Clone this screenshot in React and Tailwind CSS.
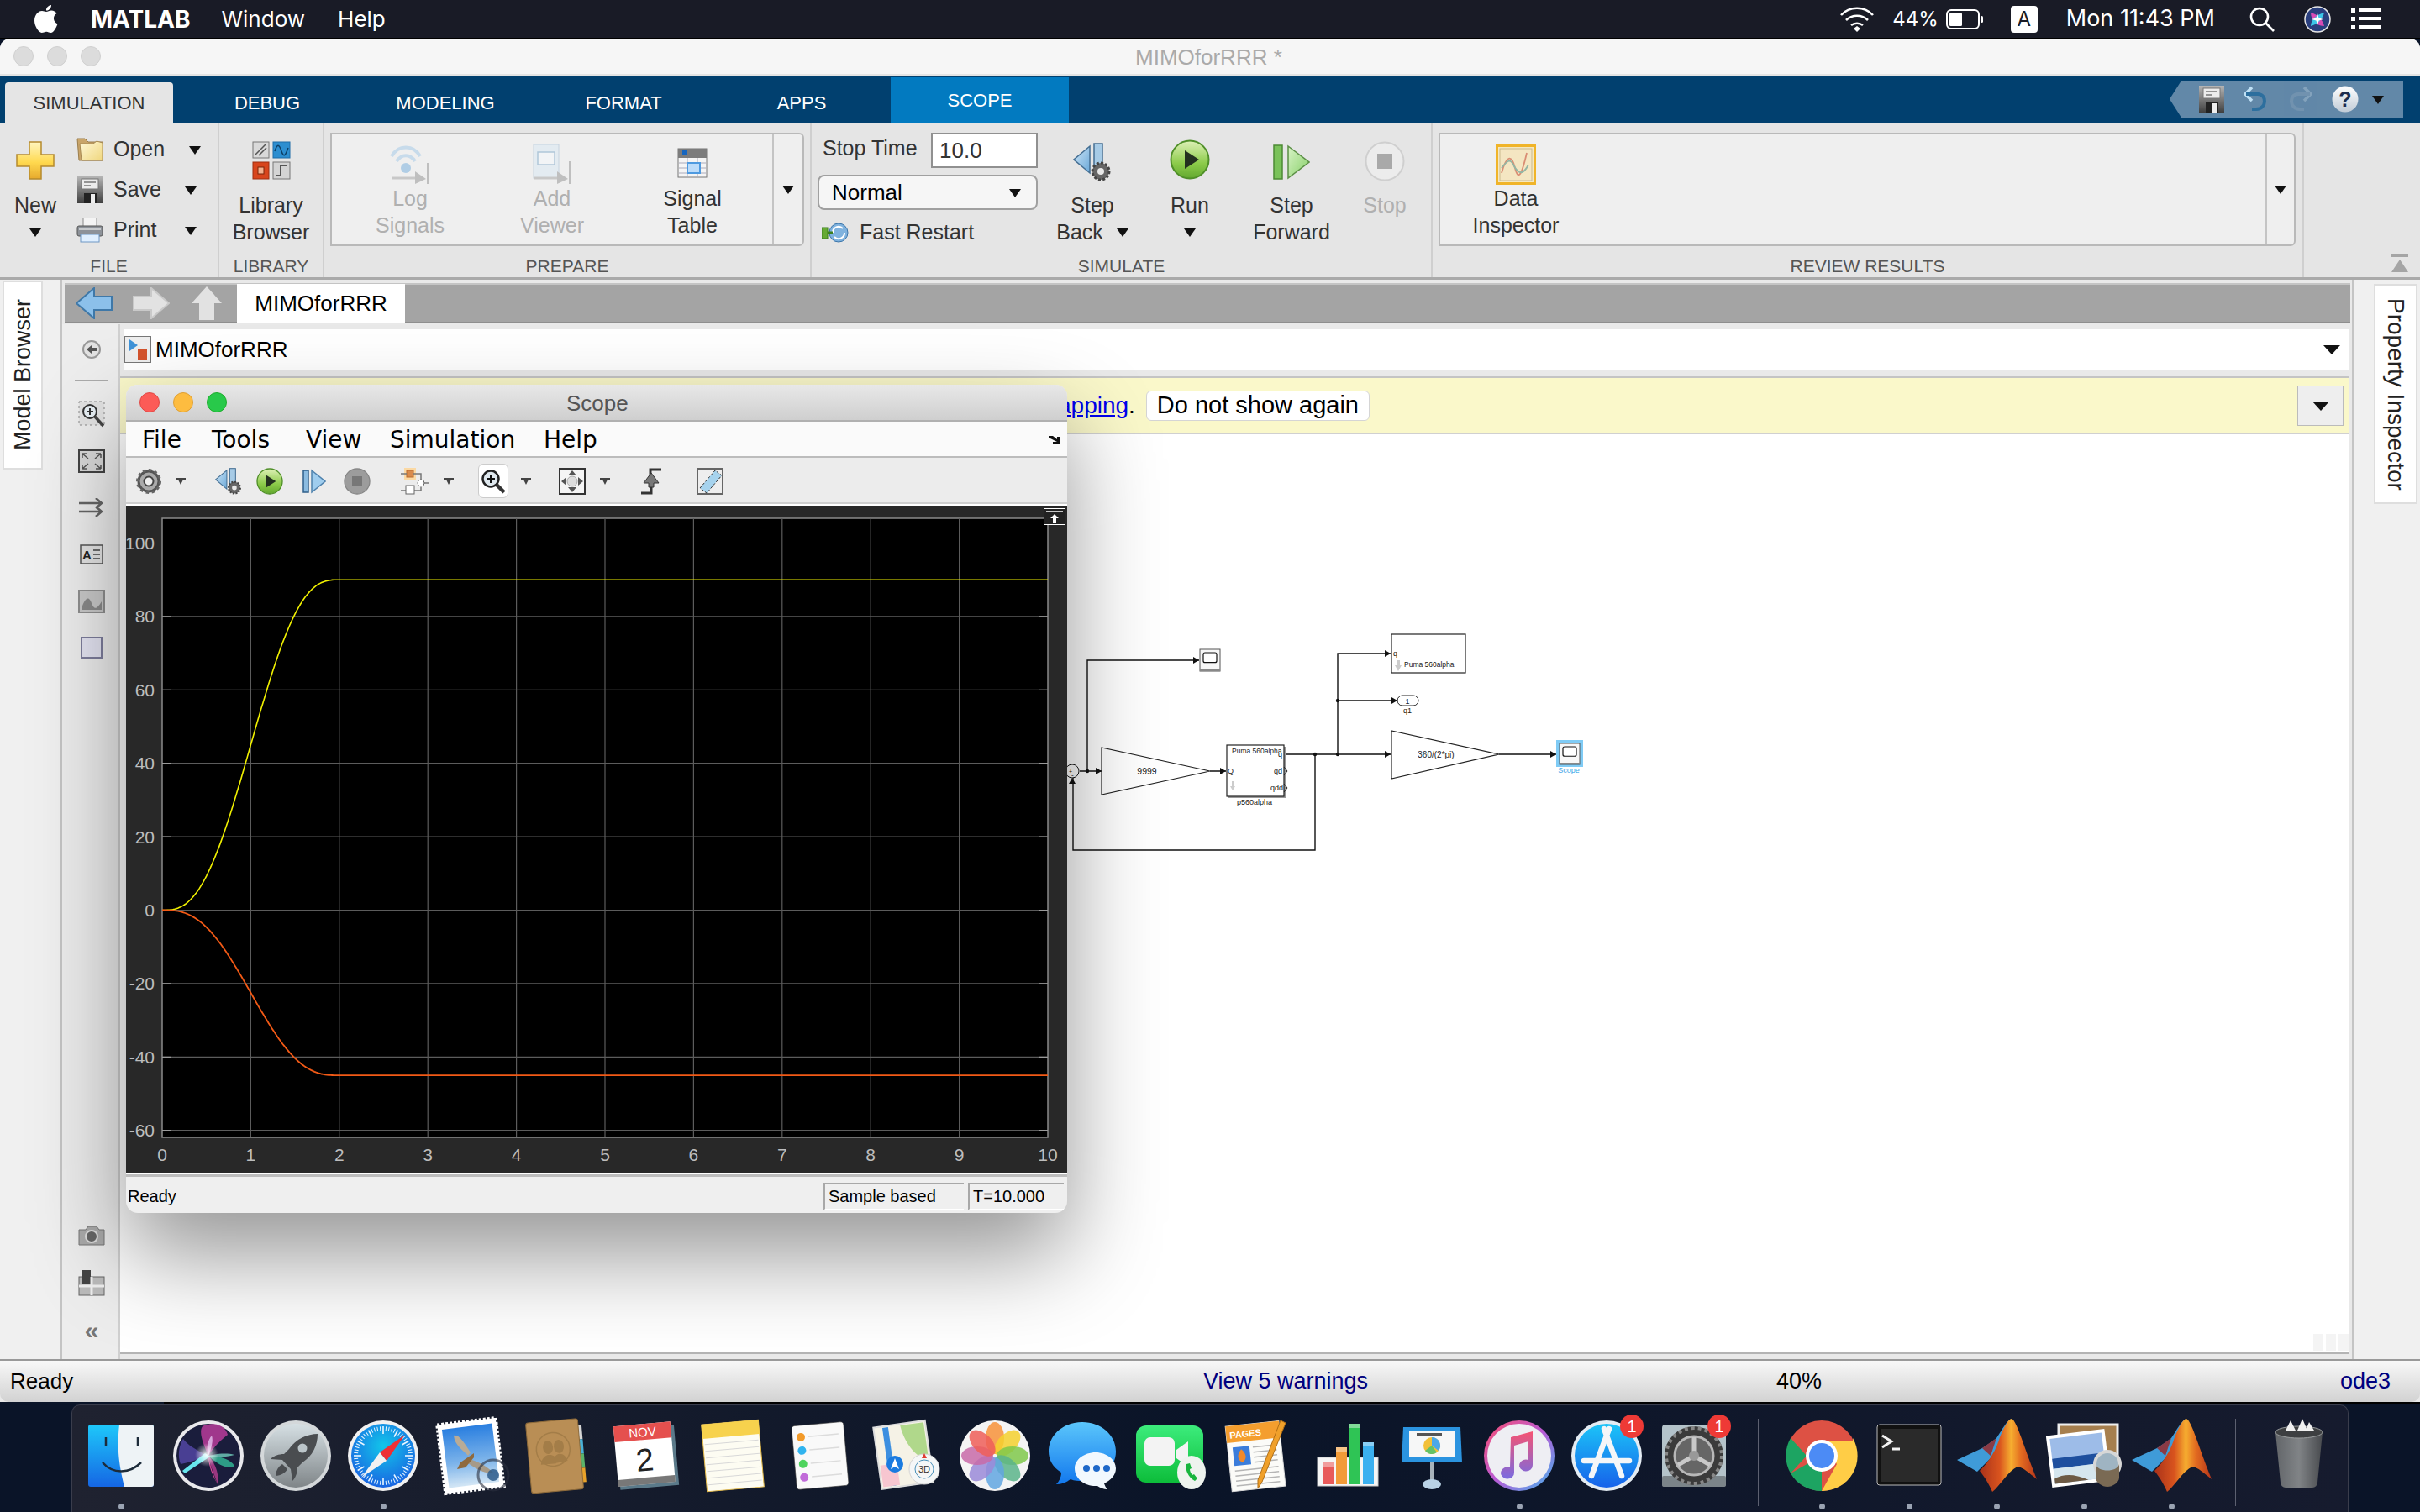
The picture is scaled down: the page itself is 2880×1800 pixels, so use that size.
import React from "react";

// ---------- small shared bits ----------

function Caret({ className = "", big = false }) {
  return (
    <svg width={big ? 20 : 14} height={big ? 12 : 11} viewBox="0 0 14 11" preserveAspectRatio="none" className={className}>
      <path d="M0 1h14L7 11z" fill="#111" />
    </svg>
  );
}

function TinyCaret({ className = "" }) {
  return (
    <svg width="12" height="8" viewBox="0 0 12 8" className={className}>
      <path d="M0 0h12v2H9L6 8 3 2H0z" fill="#444" />
    </svg>
  );
}

function Floppy({ w = 32, h = 32 }) {
  return (
    <svg width={w} height={h} viewBox="0 0 32 32">
      <defs>
        <linearGradient id="fl" x1="0" y1="0" x2="0" y2="1">
          <stop offset="0" stopColor="#b5b5b5" />
          <stop offset="1" stopColor="#3f3f3f" />
        </linearGradient>
      </defs>
      <rect x="1" y="0" width="30" height="32" fill="url(#fl)" />
      <rect x="6" y="3" width="20" height="12" fill="#ececec" stroke="#777" />
      <path d="M9 7h14M9 11h8" stroke="#777" strokeWidth="1.5" />
      <rect x="9" y="20" width="15" height="12" fill="#222" />
      <rect x="17" y="21" width="5" height="11" fill="#eee" />
    </svg>
  );
}

// ---------- ribbon icons ----------

function PlusIcon() {
  return (
    <svg width="46" height="46" viewBox="0 0 46 46">
      <defs>
        <linearGradient id="pl" x1="0" y1="0" x2="0" y2="1">
          <stop offset="0" stopColor="#fff6c0" />
          <stop offset="0.55" stopColor="#ffd94f" />
          <stop offset="1" stopColor="#e6a92c" />
        </linearGradient>
      </defs>
      <path d="M16 1h14v15h15v14H30v15H16V30H1V16h15z" fill="url(#pl)" stroke="#b58a2e" strokeWidth="1.5" />
    </svg>
  );
}

function FolderIcon() {
  return (
    <svg width="32" height="28" viewBox="0 0 32 28">
      <defs>
        <linearGradient id="fo" x1="0" y1="0" x2="1" y2="1">
          <stop offset="0" stopColor="#fff8d8" />
          <stop offset="1" stopColor="#f0d77e" />
        </linearGradient>
      </defs>
      <path d="M1 1h9l4 4h17v22H3z" fill="#c9a56a" stroke="#9a7c4a" />
      <path d="M4 7h16l4-3 7 2v21H6z" fill="url(#fo)" stroke="#a88a52" />
    </svg>
  );
}

function PrinterIcon() {
  return (
    <svg width="32" height="30" viewBox="0 0 32 30">
      <rect x="8" y="0" width="16" height="11" fill="#f4f4f4" stroke="#8a8a8a" />
      <rect x="1" y="10" width="30" height="12" rx="2" fill="#8d9299" stroke="#555" />
      <rect x="3" y="12" width="26" height="3" fill="#c6c9cc" />
      <rect x="5" y="20" width="22" height="9" fill="#dfefff" stroke="#6f97c4" />
    </svg>
  );
}

function LibraryIcon() {
  return (
    <svg width="46" height="46" viewBox="0 0 46 46">
      <rect x="1" y="1" width="19" height="19" fill="#d9d9d9" stroke="#777" />
      <path d="M4 16 16 4M8 17 17 8" stroke="#555" strokeWidth="1.5" />
      <rect x="25" y="1" width="20" height="19" fill="#2d8ed0" stroke="#1e6da8" />
      <path d="M27 12c3-9 5-9 8 0s5 4 8-4" fill="none" stroke="#0d3f66" strokeWidth="1.5" />
      <rect x="1" y="25" width="19" height="20" fill="#d8451c" stroke="#9c2f10" />
      <rect x="7" y="31" width="7" height="8" fill="#f3b08e" stroke="#7a2408" />
      <rect x="25" y="25" width="20" height="20" fill="#d4d4d4" stroke="#777" />
      <path d="M28 41h6V29h8" fill="none" stroke="#555" strokeWidth="2" />
    </svg>
  );
}

function LogSignalsIcon() {
  return (
    <svg width="48" height="48" viewBox="0 0 48 48" opacity="0.55">
      <path d="M2 14C10 0 28 0 36 14" fill="none" stroke="#a8cbe8" strokeWidth="4" />
      <path d="M8 20c6-9 16-9 22 0" fill="none" stroke="#a8cbe8" strokeWidth="4" />
      <circle cx="19" cy="28" r="6" fill="#7eb3dd" />
      <path d="M2 40h28" stroke="#aaa" strokeWidth="3" />
      <path d="M30 32l13 9-13 6z" fill="#999" />
      <path d="M45 22v25" stroke="#999" strokeWidth="2" />
    </svg>
  );
}

function AddViewerIcon() {
  return (
    <svg width="48" height="48" viewBox="0 0 48 48" opacity="0.55">
      <rect x="2" y="0" width="30" height="40" fill="#dbe8f4" stroke="#a4bdd4" />
      <rect x="7" y="9" width="20" height="15" fill="#f5f9fc" stroke="#7ea6c8" strokeWidth="1.5" />
      <path d="M2 40h28" stroke="#aaa" strokeWidth="3" />
      <path d="M30 32l13 9-13 6z" fill="#999" />
      <path d="M45 20v27" stroke="#999" strokeWidth="2" />
    </svg>
  );
}

function SignalTableIcon() {
  return (
    <svg width="36" height="36" viewBox="0 0 36 36">
      <rect x="1" y="1" width="34" height="34" fill="#f5f5f5" stroke="#777" />
      <rect x="1" y="1" width="34" height="11" fill="#7c7c7c" />
      <rect x="6" y="3" width="6" height="6" fill="#1565c0" />
      <path d="M2 18h32M2 24h32M2 30h32M12 12v23M24 12v23" stroke="#aab" />
      <rect x="12" y="18" width="15" height="12" fill="#bcdcfa" stroke="#4e9ae0" strokeWidth="2" />
    </svg>
  );
}

function FastRestartIcon() {
  return (
    <svg width="32" height="26" viewBox="0 0 32 26">
      <rect x="0" y="7" width="7" height="13" fill="#66aa33" stroke="#3b7f1e" />
      <circle cx="20" cy="13" r="11" fill="#7fb2de" stroke="#3d76aa" />
      <path d="M13 13a7 7 0 0 1 12-5M27 13a7 7 0 0 1-12 5" fill="none" stroke="#fff" strokeWidth="2" />
      <path d="M7 13h6" stroke="#3b7f1e" strokeWidth="3" />
    </svg>
  );
}

function StepBackIcon({ s = 46 }) {
  return (
    <svg width={s} height={s} viewBox="0 0 46 46">
      <defs>
        <linearGradient id="sb" x1="0" y1="0" x2="1" y2="1">
          <stop offset="0" stopColor="#cfe6f7" />
          <stop offset="1" stopColor="#6aa8d8" />
        </linearGradient>
      </defs>
      <path d="M20 4v32L1 20z" fill="url(#sb)" stroke="#456f93" strokeWidth="1.5" />
      <rect x="25" y="1" width="10" height="30" fill="#a7cbe6" stroke="#456f93" strokeWidth="1.5" />
      <circle cx="33" cy="34" r="10" fill="#666" />
      <circle cx="33" cy="34" r="10" fill="none" stroke="#444" strokeWidth="3" strokeDasharray="3 2.2" />
      <circle cx="33" cy="34" r="4" fill="#e8e8e8" />
    </svg>
  );
}

function RunIcon({ s = 48 }) {
  return (
    <svg width={s} height={s} viewBox="0 0 48 48">
      <defs>
        <linearGradient id="rg" x1="0" y1="0" x2="0" y2="1">
          <stop offset="0" stopColor="#dff1b8" />
          <stop offset="0.6" stopColor="#8ccb4a" />
          <stop offset="1" stopColor="#62a82e" />
        </linearGradient>
      </defs>
      <circle cx="24" cy="24" r="22.5" fill="url(#rg)" stroke="#4f8f28" strokeWidth="2" />
      <path d="M18 13l17 11-17 11z" fill="#23301f" />
    </svg>
  );
}

function StepForwardIcon() {
  return (
    <svg width="44" height="42" viewBox="0 0 44 42">
      <defs>
        <linearGradient id="sf" x1="0" y1="0" x2="1" y2="1">
          <stop offset="0" stopColor="#d8f3c6" />
          <stop offset="1" stopColor="#86cf67" />
        </linearGradient>
      </defs>
      <rect x="1" y="1" width="10" height="40" fill="#7ac25a" stroke="#4c8a34" strokeWidth="1.5" />
      <path d="M18 2l25 19-25 19z" fill="url(#sf)" stroke="#5b8f45" strokeWidth="1.5" />
    </svg>
  );
}

function StopIcon({ s = 48, dark = false }) {
  return (
    <svg width={s} height={s} viewBox="0 0 48 48">
      <circle cx="24" cy="24" r="22.5" fill={dark ? "#9c9c9c" : "#ececec"} stroke={dark ? "#868686" : "#cfcfcf"} strokeWidth="2" />
      <rect x="15" y="15" width="18" height="18" fill={dark ? "#777" : "#a9a9a9"} />
    </svg>
  );
}

function DataInspectorIcon() {
  return (
    <svg width="48" height="48" viewBox="0 0 48 48">
      <rect x="1.5" y="1.5" width="45" height="45" fill="#f5e8c0" stroke="#f0b429" strokeWidth="3" />
      <rect x="5" y="5" width="38" height="38" fill="#f4e6c2" stroke="#c9b98e" />
      <path d="M7 34c6-22 12-22 16-6s8 8 14-18" fill="none" stroke="#d98d74" strokeWidth="1.8" />
      <path d="M7 28c6-8 10-12 14-4s10 16 18 0" fill="none" stroke="#93b6a4" strokeWidth="1.8" />
    </svg>
  );
}

// ---------- ribbon layout ----------

function RibbonLabel({ children }) {
  return (
    <div className="h-[30px] pt-[2px] flex items-center justify-center text-[21px] leading-none text-[#555]">
      {children}
    </div>
  );
}

function Group({ width, label, children }) {
  return (
    <div className={`${width} h-full flex flex-col border-r-2 border-[#cfcfcf] pt-[12px]`}>
      <div className="h-[142px] flex">{children}</div>
      <RibbonLabel>{label}</RibbonLabel>
    </div>
  );
}

function BigButton({ icon, lines, gray, width, caret, iconClass = "h-[60px] items-end", onSameLine }) {
  return (
    <div className={`${width} flex flex-col items-center text-[25px] leading-[32px] ${gray ? "text-[#b0b0b0]" : "text-[#333]"}`}>
      <div className={`${iconClass} flex justify-center`}>{icon}</div>
      {lines.map((l, i) => (
        <div key={l} className="flex items-center gap-[16px]">
          {l}
          {onSameLine && i === lines.length - 1 && <Caret />}
        </div>
      ))}
      {caret && <div className="h-[32px] flex items-center"><Caret /></div>}
    </div>
  );
}

function FileRow({ icon, label, caretClass }) {
  return (
    <div className="h-[48px] flex items-center text-[25px] text-[#333]">
      <div className="w-[51px] pr-[6px] flex justify-center">{icon}</div>
      <span>{label}</span>
      <Caret className={caretClass} />
    </div>
  );
}

function Ribbon() {
  return (
    <div className="h-[187px] flex bg-[#e5e5e5] border-b-[3px] border-[#aaaaaa] text-[25px]">
      <Group width="w-[261px]" label="FILE">
        <div className="w-[84px] flex flex-col items-center pt-[10px]">
          <PlusIcon />
          <div className="mt-[14px] text-[#333] leading-[32px]">New</div>
          <div className="h-[32px] flex items-center"><Caret /></div>
        </div>
        <div className="-mt-[4px] w-[170px]">
          <FileRow icon={<FolderIcon />} label="Open" caretClass="ml-[29px]" />
          <FileRow icon={<Floppy />} label="Save" caretClass="ml-[28px]" />
          <FileRow icon={<PrinterIcon />} label="Print" caretClass="ml-[34px]" />
        </div>
      </Group>
      <Group width="w-[125px]" label="LIBRARY">
        <div className="w-full flex flex-col items-center text-[#333] leading-[32px]">
          <div className="h-[70px] pt-[10px]"><LibraryIcon /></div>
          <div>Library</div>
          <div>Browser</div>
        </div>
      </Group>
      <Group width="w-[580px]" label="PREPARE">
        <div className="ml-[7px] w-[564px] h-[135px] flex bg-[#efefef] border-2 border-[#b9b9b9] rounded-r-[6px]">
          <div className="w-[524px] flex pl-[8px]">
            <BigButton width="w-[170px]" gray lines={["Log", "Signals"]} icon={<LogSignalsIcon />} />
            <BigButton width="w-[168px]" gray lines={["Add", "Viewer"]} icon={<AddViewerIcon />} />
            <BigButton width="w-[166px]" lines={["Signal", "Table"]} icon={<div className="mb-[8px]"><SignalTableIcon /></div>} />
          </div>
          <div className="flex-1 border-l-2 border-[#c4c4c4] flex items-center justify-center"><Caret /></div>
        </div>
      </Group>
      <Group width="w-[739px]" label="SIMULATE">
        <div className="pl-[7px] w-[276px] flex flex-col">
          <div className="h-[42px] flex items-center justify-between text-[#333] pr-[7px]">
            <span className="pl-[6px] pb-[4px]">Stop Time</span>
            <div className="w-[127px] h-[42px] bg-white border-2 border-[#909090] pl-[8px] flex items-center text-[26px]">10.0</div>
          </div>
          <div className="mt-[8px] w-[262px] h-[42px] bg-[#f6f6f6] border-2 border-[#a0a0a0] rounded-[8px] flex items-center justify-between pl-[15px] pr-[18px] text-black text-[26px]">
            Normal <Caret />
          </div>
          <div className="mt-[11px] h-[32px] flex items-center gap-[13px] text-[#333] pl-[5px]">
            <FastRestartIcon />
            Fast Restart
          </div>
        </div>
        <BigButton width="w-[116px]" lines={["Step", "Back"]} icon={<StepBackIcon />} onSameLine iconClass="h-[70px] pt-[12px]" />
        <BigButton width="w-[116px]" lines={["Run"]} caret icon={<RunIcon />} iconClass="h-[70px] pt-[8px]" />
        <BigButton width="w-[126px]" lines={["Step", "Forward"]} icon={<StepForwardIcon />} iconClass="h-[70px] pt-[14px]" />
        <BigButton width="w-[96px]" gray lines={["Stop"]} icon={<StopIcon />} iconClass="h-[70px] pt-[10px]" />
      </Group>
      <Group width="w-[1037px]" label="REVIEW RESULTS">
        <div className="ml-[7px] w-[1020px] h-[135px] flex bg-[#efefef] border-2 border-[#b9b9b9] rounded-r-[6px]">
          <div className="w-[982px] pl-[40px]">
            <BigButton width="w-[100px]" lines={["Data", "Inspector"]} icon={<DataInspectorIcon />} />
          </div>
          <div className="flex-1 border-l-2 border-[#c4c4c4] flex items-center justify-center"><Caret /></div>
        </div>
      </Group>
      <div className="flex-1 flex flex-col items-end justify-end pr-[14px] pb-[6px]">
        <svg width="20" height="22" viewBox="0 0 20 22">
          <rect x="0" y="0" width="20" height="4" fill="#a5a5a5" />
          <path d="M10 7l10 15H0z" fill="#a5a5a5" />
        </svg>
      </div>
    </div>
  );
}

// ---------- mac menu bar ----------

function MenuBar() {
  return (
    <div className="h-[46px] shrink-0 bg-[#191b26] border-b border-black flex items-center text-white text-[26px] font-['Inter',sans-serif]">
      <svg width="30" height="36" viewBox="0 0 30 36" className="ml-[40px]">
        <path d="M21 1c.3 3-2.4 6.8-6 6.6C14.600 4.400 17.500 1.400 21 1zM15 9c1.800 0 3.600-1.400 6.200-1.400 2.500 0 5 1.300 6.300 3.500-5.200 2.900-4.400 10.200 1 12.300-1.300 3.500-4.600 10.600-8 10.600-2 0-3-1.300-5.300-1.300s-3.600 1.300-5.500 1.300C5.800 34 1 26 1 19.600 1 12.900 5.400 8 10 8c2 0 3.600 1 5 1z" fill="#fff" />
      </svg>
      <span className="ml-[38px] font-bold text-[28px]">MATLAB</span>
      <span className="ml-[37px]">Window</span>
      <span className="ml-[39px]">Help</span>
      <div className="ml-auto flex items-center">
        <svg width="40" height="30" viewBox="0 0 40 30" fill="none" stroke="#fff" strokeWidth="2.6">
          <path d="M1 10c10-11 28-11 38 0M7 16c7-7 19-7 26 0M13 22c4-3 10-3 14 0" />
          <path d="M16 26l4-3 4 3-4 4z" fill="#fff" stroke="none" />
        </svg>
        <span className="ml-[22px] text-[24px]">44%</span>
        <svg width="46" height="24" viewBox="0 0 46 24" className="ml-[9px]">
          <rect x="1" y="1" width="38" height="22" rx="5" fill="none" stroke="#fff" strokeWidth="2" />
          <rect x="4" y="4" width="15" height="16" rx="1.500" fill="#fff" />
          <rect x="41" y="8" width="3" height="8" rx="1.500" fill="#fff" />
        </svg>
        <div className="ml-[31px] w-[32px] h-[32px] rounded-[4px] bg-white text-[#191b26] flex items-center justify-center text-[24px]">A</div>
        <span className="ml-[34px] text-[27px]">Mon 11:43 PM</span>
        <svg width="30" height="30" viewBox="0 0 30 30" className="ml-[41px]" fill="none" stroke="#fff" strokeWidth="2.6">
          <circle cx="12" cy="12" r="10" />
          <path d="M19 19l10 10" />
        </svg>
        <svg width="32" height="32" viewBox="0 0 32 32" className="ml-[35px]">
          <circle cx="16" cy="16" r="15" fill="#2a3f7e" stroke="#e6e6e6" strokeWidth="1.500" />
          <path d="M8 8c8 2 14 8 16 16C16 24 8 18 8 8z" fill="#d64bb5" />
          <path d="M24 8c-2 8-8 14-16 16 0-8 8-14 16-16z" fill="#3cc7e8" />
          <path d="M16 9l1.500 5.500 5.500 1.500-5.500 1.500-1.500 5.500-1.500-5.500-5.500-1.500 5.500-1.500z" fill="#fff" />
        </svg>
        <svg width="36" height="26" viewBox="0 0 36 26" className="ml-[24px] mr-[46px]" fill="#fff">
          <rect x="0" y="0" width="5" height="5" />
          <rect x="9" y="0" width="27" height="4" />
          <rect x="0" y="10" width="5" height="5" />
          <rect x="9" y="10" width="27" height="4" />
          <rect x="0" y="20" width="5" height="5" />
          <rect x="9" y="20" width="27" height="4" />
        </svg>
      </div>
    </div>
  );
}

// ---------- tab bar ----------

function RibbonTabs() {
  const tabs = ["DEBUG", "MODELING", "FORMAT", "APPS"];
  return (
    <div className="h-[56px] shrink-0 bg-[#01406f] flex items-end pl-[6px] text-[22px] text-white">
      <div className="w-[200px] h-[48px] bg-[#e5e5e5] rounded-t-[4px] flex items-center justify-center text-[#333]">SIMULATION</div>
      <div className="w-[6px]" />
      {tabs.map((t) => (
        <div key={t} className="w-[212px] h-[48px] flex items-center justify-center">{t}</div>
      ))}
      <div className="w-[212px] h-[54px] bg-[#027ac0] pt-[1px] flex items-center justify-center">SCOPE</div>
      <div className="ml-auto mb-[6px] mr-[20px] w-[278px] h-[44px] bg-[#6288a8] flex items-center pl-[34px] [clip-path:polygon(14px_0,100%_0,100%_100%,14px_100%,0_50%)]">
        <Floppy />
        <svg width="30" height="34" viewBox="0 0 30 34" className="ml-[22px]" fill="none">
          <path d="M10 3L2 11l8 8" stroke="#bfe0f5" strokeWidth="3.500" />
          <path d="M3 11h14c11 0 11 18-2 18h-5" stroke="#2d6f9e" strokeWidth="4" />
        </svg>
        <svg width="30" height="34" viewBox="0 0 30 34" className="ml-[22px]" fill="none" opacity="0.55">
          <path d="M20 3l8 8-8 8" stroke="#9fb8cc" strokeWidth="3.500" />
          <path d="M27 11H13C2 11 2 29 15 29h5" stroke="#7f9cb4" strokeWidth="4" />
        </svg>
        <svg width="32" height="34" viewBox="0 0 32 34" className="ml-[23px]">
          <defs>
            <linearGradient id="hp" x1="0" y1="0" x2="0" y2="1">
              <stop offset="0" stopColor="#ffffff" />
              <stop offset="1" stopColor="#c0cbd6" />
            </linearGradient>
          </defs>
          <circle cx="16" cy="17" r="15.500" fill="url(#hp)" />
          <text x="16" y="26" textAnchor="middle" fontSize="25" fontWeight="700" fill="#1d2d4f">?</text>
        </svg>
        <Caret className="ml-[16px]" />
      </div>
    </div>
  );
}

// ---------- simulink editor ----------

function NavArrow({ rotate = "", fill = "#e2e2e2", stroke = "#c9c9c9" }) {
  return (
    <svg width="44" height="38" viewBox="0 0 44 38" className={rotate}>
      <path d="M1 19L22 1v10h21v16H22v10z" fill={fill} stroke={stroke} strokeWidth="2" />
    </svg>
  );
}

function ToolIcon({ children, mt }) {
  return <div className={`${mt} h-[32px] flex items-center justify-center`}>{children}</div>;
}

function LeftTools() {
  return (
    <div className="w-[69px] shrink-0 flex flex-col items-center pt-[19px] pl-[3px] bg-[#ededed] border-r-2 border-[#d0d0d0]">
      <svg width="22" height="22" viewBox="0 0 22 22">
        <circle cx="11" cy="11" r="10" fill="#e2e2e2" stroke="#999" strokeWidth="2" />
        <path d="M5 11l6-5v3h6v4h-6v3z" fill="#555" />
      </svg>
      <div className="mt-[25px] w-[40px] h-[2px] bg-[#aaa]" />
      <ToolIcon mt="mt-[23px]">
        <svg width="32" height="32" viewBox="0 0 32 32">
          <rect x="1" y="1" width="30" height="28" fill="#e2e2e2" stroke="#888" strokeDasharray="3 3" />
          <circle cx="14" cy="13" r="8" fill="#e8f0f5" stroke="#333" strokeWidth="2" />
          <path d="M10 13h8M14 9v8" stroke="#333" strokeWidth="2" />
          <path d="M20 19l10 11" stroke="#444" strokeWidth="3.500" />
        </svg>
      </ToolIcon>
      <ToolIcon mt="mt-[24px]">
        <svg width="32" height="28" viewBox="0 0 32 28">
          <rect x="1" y="1" width="30" height="26" fill="#d8d8d8" stroke="#444" strokeWidth="2" />
          <path d="M5 5l7 6M5 5h6M5 5v5M27 5l-7 6M27 5h-6M27 5v5M5 23l7-6M5 23h6M5 23v-5M27 23l-7-6M27 23h-6M27 23v-5" stroke="#555" strokeWidth="1.500" fill="none" />
        </svg>
      </ToolIcon>
      <ToolIcon mt="mt-[23px]">
        <svg width="30" height="22" viewBox="0 0 30 22" fill="none" stroke="#666" strokeWidth="2.500">
          <path d="M0 6h26M20 0l7 6-7 6M0 16h26M20 10l7 6-7 6" />
        </svg>
      </ToolIcon>
      <ToolIcon mt="mt-[24px]">
        <svg width="28" height="24" viewBox="0 0 28 24">
          <rect x="1" y="1" width="26" height="22" fill="#e4e4e4" stroke="#555" strokeWidth="1.500" />
          <text x="3" y="18" fontSize="15" fontWeight="700" fill="#222">A</text>
          <path d="M16 7h8M16 12h8M16 17h8" stroke="#444" strokeWidth="1.500" />
        </svg>
      </ToolIcon>
      <ToolIcon mt="mt-[24px]">
        <svg width="32" height="28" viewBox="0 0 32 28">
          <rect x="1" y="1" width="30" height="26" fill="#c9c9c9" stroke="#8f8f8f" strokeWidth="2" />
          <path d="M4 22c5-14 9-14 12-6s6 8 12-2v10H4z" fill="#8a8a8a" />
        </svg>
      </ToolIcon>
      <ToolIcon mt="mt-[23px]">
        <div className="w-[26px] h-[26px] bg-[#e4e4f2] border-2 border-[#7d7d9c]" />
      </ToolIcon>
      <div className="mt-auto flex flex-col items-center pb-[19px]">
        <svg width="32" height="24" viewBox="0 0 32 24">
          <path d="M1 5h8l3-4h10l3 4h6v18H1z" fill="#aaa" stroke="#777" />
          <circle cx="16" cy="13" r="7" fill="#666" stroke="#ddd" strokeWidth="2" />
        </svg>
        <svg width="32" height="32" viewBox="0 0 32 32" className="mt-[28px]">
          <rect x="1" y="9" width="30" height="22" fill="#bbb" stroke="#666" />
          <rect x="5" y="1" width="10" height="16" fill="#444" />
          <path d="M1 20h30M16 9v22" stroke="#eee" strokeWidth="3" />
        </svg>
        <div className="mt-[26px] text-[#777] font-bold text-[30px] leading-[30px]">«</div>
      </div>
    </div>
  );
}

function Diagram() {
  // viewBox is in page pixels, the svg sits where page x 1100 meets the canvas
  const wire = { fill: "none", stroke: "#111", strokeWidth: 1.4 };
  const tx = "font-['Liberation_Sans',sans-serif]";
  const Head = ({ x, y, dir = "r" }) =>
    dir === "r" ? <path d={`M${x - 7} ${y - 4}L${x} ${y}L${x - 7} ${y + 4}z`} fill="#111" /> : <path d={`M${x - 4} ${y + 7}L${x} ${y}L${x + 4} ${y + 7}z`} fill="#111" />;
  const Dot = ({ x, y }) => <circle cx={x} cy={y} r="2.2" fill="#111" />;
  const MiniScope = ({ x, y, w, h }) => (
    <g>
      <rect x={x} y={y} width={w} height={h} fill="#f7f7f7" stroke="#555" />
      <rect x={x} y={y + h - 2} width={w} height="2" fill="#888" />
      <rect x={x + 4} y={y + 4} width={w - 8} height={h * 0.45} rx="2" fill="#fff" stroke="#111" strokeWidth="1.2" />
    </g>
  );
  return (
    <svg width="1000" height="700" viewBox="1100 517 1000 700" className="absolute left-[957px] top-0">
      <circle cx="1276" cy="918" r="8" fill="#fff" stroke="#111" />
      <text x="1272" y="921" fontSize="7" className={tx}>+</text>
      <text x="1275" y="925" fontSize="8" className={tx}>-</text>
      <path d="M1285 918H1311M1294 918V786H1427M1440 918H1459M1528 898H1655M1592 898V778H1655M1592 834H1663M1565 898V1012H1277V926M1784 898H1852" {...wire} />
      <Head x={1311} y={918} /><Head x={1427} y={786} /><Head x={1459} y={918} />
      <Head x={1655} y={898} /><Head x={1655} y={778} /><Head x={1663} y={834} /><Head x={1852} y={898} />
      <Head x={1276} y={926} dir="u" />
      <Dot x={1294} y={918} /><Dot x={1565} y={898} /><Dot x={1592} y={898} /><Dot x={1592} y={834} />
      <path d="M1311 890V946L1440 918z" fill="#fff" stroke="#222" strokeWidth="1.200" />
      <text x="1365" y="922" fontSize="10.500" textAnchor="middle" fill="#222" className={tx}>9999</text>
      <MiniScope x={1428} y={773} w={24} h={26} />
      <rect x="1462" y="889" width="68" height="61" fill="#999" />
      <rect x="1460" y="887" width="68" height="61" fill="#fff" stroke="#222" strokeWidth="1.200" />
      <text x="1466" y="897" fontSize="8.500" fill="#222" className={tx}>Puma 560alpha</text>
      <text x="1461" y="921" fontSize="9" fill="#222" className={tx}>Q</text>
      <text x="1521" y="901" fontSize="9" fill="#222" className={tx}>q</text>
      <text x="1516" y="921" fontSize="9" fill="#222" className={tx}>qd</text>
      <text x="1512" y="941" fontSize="9" fill="#222" className={tx}>qdd</text>
      <path d="M1528 913l4 5-4 5M1528 933l4 5-4 5" fill="none" stroke="#222" />
      <path d="M1464 936l3 5 3-5h-2v-6h-2v6z" fill="#ccc" />
      <text x="1493" y="958" fontSize="9" textAnchor="middle" fill="#222" className={tx}>p560alpha</text>
      <rect x="1656" y="755" width="88" height="46" fill="#fff" stroke="#222" strokeWidth="1.200" />
      <text x="1658" y="781" fontSize="9" fill="#222" className={tx}>q</text>
      <text x="1671" y="794" fontSize="8.500" fill="#222" className={tx}>Puma 560alpha</text>
      <path d="M1660 792l4 7 4-7h-2v-6h-4v6z" fill="#ccc" />
      <rect x="1663" y="828" width="25" height="12" rx="6" fill="#fff" stroke="#222" />
      <text x="1675" y="837.500" fontSize="9" textAnchor="middle" fill="#222" className={tx}>1</text>
      <text x="1675" y="849" fontSize="9" textAnchor="middle" fill="#222" className={tx}>q1</text>
      <path d="M1656 870V927L1784 898z" fill="#fff" stroke="#222" strokeWidth="1.200" />
      <text x="1709" y="902" fontSize="10" textAnchor="middle" fill="#222" className={tx}>360/(2*pi)</text>
      <rect x="1852" y="881" width="32" height="32" fill="#7fcbf5" />
      <MiniScope x={1856} y={885} w={24} h={25} />
      <text x="1867" y="920" fontSize="9" textAnchor="middle" fill="#3ba4e8" className={tx}>Scope</text>
    </svg>
  );
}

function Editor() {
  return (
    <div className="flex-1 min-h-0 flex">
      <div className="w-[74px] shrink-0 bg-[#f0f0f0] border-r-2 border-[#c4c4c4] pl-[3px] pt-[1px]">
        <div className="w-[48px] h-[225px] bg-white border-2 border-[#dedede] flex items-center justify-center">
          <span className="[writing-mode:vertical-rl] rotate-180 text-[27px] text-[#222]">Model Browser</span>
        </div>
      </div>
      <div className="flex-1 min-w-0 flex flex-col">
        <div className="h-[53px] shrink-0 pl-[3px] pt-[4px] pr-[2px] flex">
          <div className="flex-1 h-[48px] bg-[#a4a4a4] border-y-2 border-t-[#c4c4c4] border-b-[#8e8e8e] flex items-stretch">
            <div className="w-[205px] flex items-center pl-[13px] gap-[24px]">
              <NavArrow fill="#8cc0ea" stroke="#3f78a8" />
              <NavArrow rotate="rotate-180" />
              <svg width="40" height="42" viewBox="0 0 40 42">
                <path d="M20 1l18 20H29v20H11V21H2z" fill="#e2e2e2" />
              </svg>
            </div>
            <div className="w-[200px] -my-[1px] bg-white flex items-center justify-center text-[26px] text-black">MIMOforRRR</div>
          </div>
        </div>
        <div className="flex-1 min-h-0 flex">
          <LeftTools />
          <div className="flex-1 min-w-0 flex flex-col pb-[6px] pr-[4px]">
            <div className="mt-[6px] ml-[5px] h-[48px] shrink-0 bg-white flex items-center text-[26px] text-black pr-[10px]">
              <svg width="32" height="32" viewBox="0 0 32 32" className="mr-[5px]">
                <rect x="0.500" y="0.500" width="31" height="31" fill="#eee" stroke="#777" />
                <path d="M6 4l10 7-10 7z" fill="#3f93d8" />
                <rect x="16" y="16" width="11" height="12" fill="#d4532c" />
              </svg>
              MIMOforRRR
              <Caret big className="ml-auto" />
            </div>
            <div className="mt-[8px] h-[69px] shrink-0 bg-[#faf8ca] border-t-2 border-[#c4c4c4] border-b border-b-[#d0d0d0] flex items-center text-[28px] text-black pl-[1116px] relative">
              <a className="text-[#0000ee] underline">apping</a>.
              <div className="ml-[13px] w-[266px] h-[36px] bg-white rounded-[6px] border border-[#d5d5d5] flex items-center justify-center text-[29px]">Do not show again</div>
              <div className="ml-auto mr-[6px] w-[55px] h-[48px] bg-[#eee] border border-[#bbb] flex items-center justify-center"><Caret big /></div>
            </div>
            <div className="flex-1 min-h-0 bg-white border-b-2 border-[#b4b4b4] relative overflow-hidden">
              <Diagram />
              <div className="absolute right-[0px] bottom-[2px] w-[42px] h-[20px] flex gap-[3px] opacity-60">
                <div className="w-[12px] bg-[#eee]" /><div className="w-[12px] bg-[#eee]" /><div className="w-[12px] bg-[#eee]" />
              </div>
            </div>
          </div>
        </div>
      </div>
      <div className="w-[81px] shrink-0 bg-[#f0f0f0] border-l-2 border-[#c4c4c4] pt-[5px] pl-[24px]">
        <div className="w-[52px] h-[262px] bg-white border-2 border-[#dedede] flex items-center justify-center">
          <span className="[writing-mode:vertical-rl] text-[28px] text-[#222]">Property Inspector</span>
        </div>
      </div>
    </div>
  );
}

function StatusBar() {
  return (
    <div className="h-[51px] shrink-0 border-t-2 border-[#999] bg-gradient-to-b from-[#f8f8f8] to-[#d2d2d2] rounded-b-[10px] relative flex items-center text-[27px] text-black">
      <span className="pl-[12px] w-[1432px] text-[26px]">Ready</span>
      <span className="text-[#00007f] w-[682px]">View 5 warnings</span>
      <span className="w-[671px]">40%</span>
      <span className="text-[#00007f]">ode3</span>
    </div>
  );
}

// ---------- scope window ----------

function ScopePlot() {
  const x0 = 43, xs = 105.4; // offsets inside the 1120 wide window
  const zero = 481.5, ys = 4.37; // y of value 0 inside the plot, px per unit
  const px = (t) => x0 + t * xs;
  const py = (v) => zero - v * ys;
  const curve = (q) => {
    let d = "";
    for (let t = 0; t <= 2.001; t += 0.02) {
      const s = t / 2;
      const v = q * (10 * s ** 3 - 15 * s ** 4 + 6 * s ** 5);
      d += `${t === 0 ? "M" : "L"}${px(t).toFixed(1)} ${py(v).toFixed(1)}`;
    }
    return `${d}L${px(10)} ${py(q)}`;
  };
  const xt = [0, 1, 2, 3, 4, 5, 6, 7, 8, 9, 10];
  const yt = [100, 80, 60, 40, 20, 0, -20, -40, -60];
  return (
    <svg width="1120" height="794" viewBox="0 0 1120 794" className="block">
      <rect x="0" y="0" width="1120" height="794" fill="#282828" />
      <rect x={x0} y="15" width={xs * 10} height="737" fill="#000" stroke="#8a8a8a" strokeWidth="1.500" />
      {xt.slice(1, -1).map((t) => (
        <path key={t} d={`M${px(t)} 15V752`} stroke="#5c5c5c" strokeWidth="1.200" />
      ))}
      {yt.map((v) => (
        <g key={v}>
          <path d={`M${x0} ${py(v)}H${px(10)}`} stroke="#5c5c5c" strokeWidth="1.200" />
          <path d={`M${x0} ${py(v)}h10M${px(10) - 10} ${py(v)}h10`} stroke="#9a9a9a" strokeWidth="1.200" />
          <text x="34" y={py(v) + 7.500} fontSize="21" textAnchor="end" fill="#bdbdbd" className="font-['Liberation_Sans',sans-serif]">{v}</text>
        </g>
      ))}
      {xt.map((t) => (
        <text key={t} x={px(t)} y="780" fontSize="21" textAnchor="middle" fill="#bdbdbd" className="font-['Liberation_Sans',sans-serif]">{t}</text>
      ))}
      <path d={curve(90)} fill="none" stroke="#f0f000" strokeWidth="1.600" />
      <path d={curve(-45)} fill="none" stroke="#f25a16" strokeWidth="1.800" />
    </svg>
  );
}

function ScopeWindow() {
  return (
    <div className="absolute left-[150px] top-[458px] w-[1120px] h-[986px] rounded-[14px] rounded-b-[14px] bg-[#efefef] shadow-[0_50px_110px_rgba(0,0,0,0.42)] overflow-hidden flex flex-col">
      <div className="h-[44px] shrink-0 bg-gradient-to-b from-[#e8e8e8] to-[#cfcfcf] border-b-2 border-[#b0b0b0] flex items-center pl-[16px]">
        <div className="w-[24px] h-[24px] rounded-full bg-[#fc5b57] border border-[#df4744]" />
        <div className="ml-[16px] w-[24px] h-[24px] rounded-full bg-[#fdbc40] border border-[#de9f34]" />
        <div className="ml-[16px] w-[24px] h-[24px] rounded-full bg-[#28c94a] border border-[#1dad2b]" />
        <span className="ml-[404px] pt-[2px] text-[26px] text-[#555]">Scope</span>
      </div>
      <div className="h-[43px] shrink-0 bg-[#fafafa] flex items-center pt-[2px] pl-[19px] text-[28px] text-black font-['DejaVu_Sans',sans-serif] border-b-2 border-[#bcbcbc]">
        <span className="w-[83px]">File</span>
        <span className="w-[112px]">Tools</span>
        <span className="w-[100px]">View</span>
        <span className="w-[183px]">Simulation</span>
        <span>Help</span>
        <svg width="14" height="12" viewBox="0 0 14 12" className="ml-auto mr-[8px]">
          <path d="M0 1h5l5 4V2l4 0v9H5l0-3h5L2 4H0z" fill="#111" />
        </svg>
      </div>
      <div className="h-[55px] shrink-0 bg-[#ececec] border-b-2 border-[#cfcfcf] flex items-center pt-[2px]">
        <svg width="30" height="30" viewBox="0 0 30 30" className="ml-[12px]">
          <circle cx="15" cy="15" r="12" fill="#aaa" stroke="#555" strokeWidth="3" />
          <circle cx="15" cy="15" r="13.500" fill="none" stroke="#666" strokeWidth="3" strokeDasharray="3.500 3.500" />
          <circle cx="15" cy="15" r="5.500" fill="#eee" stroke="#444" strokeWidth="2" />
        </svg>
        <TinyCaret className="ml-[17px]" />
        <div className="ml-[35px]"><StepBackIcon s={32} /></div>
        <div className="ml-[17px]"><RunIcon s={32} /></div>
        <svg width="28" height="30" viewBox="0 0 28 30" className="ml-[23px]">
          <rect x="1" y="2" width="6" height="26" fill="#8bbbe0" stroke="#2f5f8a" strokeWidth="1.500" />
          <path d="M11 2l16 13-16 13z" fill="#9fcdee" stroke="#4f82ad" strokeWidth="1.500" />
        </svg>
        <div className="ml-[21px]"><StopIcon s={32} dark /></div>
        <svg width="34" height="32" viewBox="0 0 34 32" className="ml-[36px]">
          <rect x="4" y="0" width="14" height="14" fill="#fbd9a4" />
          <rect x="7" y="3" width="8" height="8" fill="#d98b4d" stroke="#b96a2c" />
          <path d="M0 7h7M15 7h9v11M0 27h6M14 27h10v-4M28 18h6" stroke="#777" strokeWidth="1.500" fill="none" />
          <circle cx="24" cy="18" r="4" fill="#fff" stroke="#666" />
          <rect x="6" y="21" width="10" height="10" fill="#fff" stroke="#666" />
        </svg>
        <TinyCaret className="ml-[17px]" />
        <div className="ml-[29px] w-[36px] h-[41px] bg-white rounded-[6px] border border-[#ccc] flex items-center justify-center">
          <svg width="30" height="30" viewBox="0 0 30 30">
            <circle cx="12" cy="12" r="9.500" fill="#dfe8ee" stroke="#222" strokeWidth="2.500" />
            <path d="M7 12h10M12 7v10" stroke="#111" strokeWidth="2" />
            <path d="M19 19l9 9" stroke="#333" strokeWidth="4.500" />
          </svg>
        </div>
        <TinyCaret className="ml-[15px]" />
        <svg width="32" height="32" viewBox="0 0 32 32" className="ml-[33px]">
          <rect x="1" y="1" width="30" height="30" fill="#f5f5f5" stroke="#333" strokeWidth="2" />
          <path d="M16 3l5 6H11zM16 29l-5-6h10zM3 16l6-5v10zM29 16l-6 5V11z" fill="#555" />
          <circle cx="16" cy="16" r="6" fill="#ddd" stroke="#aaa" />
        </svg>
        <TinyCaret className="ml-[17px]" />
        <svg width="26" height="32" viewBox="0 0 26 32" className="ml-[36px]">
          <path d="M25 2H12v12M1 30h12V16" fill="none" stroke="#333" strokeWidth="3" />
          <path d="M13 6l-9 12h6v5h6v-5h6z" fill="#777" stroke="#333" />
        </svg>
        <svg width="32" height="32" viewBox="0 0 32 32" className="ml-[41px]">
          <rect x="1" y="1" width="30" height="30" fill="#eee" stroke="#666" strokeWidth="2" />
          <path d="M4 24L22 3l8 6-18 21z" fill="#a6d3ee" stroke="#333" strokeDasharray="3 2" />
        </svg>
      </div>
      <div className="h-[2px] shrink-0 bg-white" />
      <div className="relative h-[794px] shrink-0">
        <ScopePlot />
        <svg width="26" height="20" viewBox="0 0 26 20" className="absolute right-[2px] top-[3px]">
          <rect x="0.500" y="0.500" width="25" height="19" fill="#222" stroke="#fff" />
          <path d="M3 4h20" stroke="#fff" strokeWidth="1.500" />
          <path d="M13 7l5 5h-3v6h-4v-6H8z" fill="#fff" />
        </svg>
      </div>
      <div className="h-[2px] shrink-0 bg-white" />
      <div className="h-[3px] shrink-0 bg-[#bdbdbd]" />
      <div className="flex-1 flex items-center text-[20px] text-black pt-[3px] pr-[4px] pl-[2px]">
        <span className="mr-auto">Ready</span>
        <div className="w-[167px] h-[33px] mr-[5px] border-t-2 border-l-2 border-[#a8a8a8] border-b-2 border-b-white flex items-center pl-[4px]">Sample based</div>
        <div className="w-[114px] h-[33px] border-t-2 border-l-2 border-[#a8a8a8] border-b-2 border-b-white flex items-center pl-[4px]">T=10.000</div>
      </div>
    </div>
  );
}

// ---------- dock ----------

function DockFinder() {
  return (
    <>
      <defs>
        <linearGradient id="d-fi" x1="0" y1="0" x2="0" y2="1">
          <stop offset="0" stopColor="#1ec8fa" />
          <stop offset="1" stopColor="#1566e4" />
        </linearGradient>
      </defs>
      <rect x="13" y="15" width="78" height="74" rx="3" fill="url(#d-fi)" />
      <path d="M50 15h38a3 3 0 0 1 3 3v68a3 3 0 0 1-3 3H56c-4-18-10-40-6-74z" fill="#eef3f6" />
      <path d="M34 30v10M72 30v10" stroke="#1d2b3a" strokeWidth="2.500" />
      <path d="M30 60c12 14 32 14 46 0" fill="none" stroke="#1d2b3a" strokeWidth="2.500" />
    </>
  );
}

function DockSiri() {
  return (
    <>
      <defs>
        <radialGradient id="d-si">
          <stop offset="0" stopColor="#fff" stopOpacity="0.95" />
          <stop offset="1" stopColor="#fff" stopOpacity="0" />
        </radialGradient>
      </defs>
      <circle cx="52" cy="52" r="42" fill="#e9e9ec" />
      <circle cx="52" cy="52" r="38" fill="#1a1d3c" />
      <path d="M52 52C46 38 40 24 45 17c12-6 27-2 30 10-9 7-17 15-23 25z" fill="#b83c9a" opacity="0.85" />
      <path d="M52 52C38 46 26 38 22 32c-5 8-7 20-3 30 10-2 22-6 33-10z" fill="#5a4bb0" opacity="0.75" />
      <path d="M52 52C56 42 58 34 56 28c-5 6-7 14-4 24z" fill="#e6c2f0" opacity="0.8" />
      <path d="M52 52c12 0 26 4 31 12-7 6-21-2-31-12z" fill="#35c8a0" opacity="0.75" />
      <path d="M52 52c12-3 24-3 31-1-10 3-21 3-31 1z" fill="#7fe8d0" opacity="0.7" />
      <path d="M52 52c2 12 6 24 11 34-6-10-11-22-11-34z" fill="#e14c9c" />
      <path d="M52 52c2 12 7 22 11 34 2-12-2-24-11-34z" fill="#d1439c" opacity="0.7" />
      <path d="M48 49L21 70l3 3 30-20z" fill="#67e6ee" />
      <circle cx="50" cy="51" r="14" fill="url(#d-si)" />
    </>
  );
}

function DockRocket() {
  return (
    <>
      <defs>
        <linearGradient id="d-ro" x1="0" y1="0" x2="0" y2="1">
          <stop offset="0" stopColor="#d6e0e4" />
          <stop offset="1" stopColor="#7f8588" />
        </linearGradient>
      </defs>
      <circle cx="52" cy="52" r="42" fill="#d4d8da" />
      <circle cx="52" cy="52" r="38" fill="url(#d-ro)" />
      <path d="M78 26C66 26 52 32 44 44l-6 6c-6 0-12 2-16 6l14 1 10 11 2 14c4-4 6-10 6-16l6-6c12-8 18-20 18-34z" fill="#4a4d50" />
      <path d="M36 62c-4 2-8 8-8 14 6 0 12-4 14-8z" fill="#4a4d50" />
      <circle cx="60" cy="43" r="5.500" fill="#bcc6ca" />
    </>
  );
}

function DockSafari() {
  const ticks = [];
  for (let a = 0; a < 360; a += 6) ticks.push(a);
  return (
    <>
      <defs>
        <radialGradient id="d-sa" cx="0.5" cy="0.35" r="0.75">
          <stop offset="0" stopColor="#12c6ea" />
          <stop offset="1" stopColor="#1a55e0" />
        </radialGradient>
      </defs>
      <circle cx="52" cy="52" r="42" fill="#f1f1f1" />
      <circle cx="52" cy="52" r="38" fill="url(#d-sa)" />
      {ticks.map((a) => (
        <path key={a} d={a % 30 === 0 ? "M52 17v9" : "M52 17v5"} stroke="#eaf6ff" strokeWidth={a % 30 === 0 ? 1.6 : 1} transform={`rotate(${a} 52 52)`} />
      ))}
      <path d="M78 27L48 48l8 10z" fill="#ee2f35" />
      <path d="M26 78l22-30 8 10z" fill="#f1f1f1" />
    </>
  );
}

function DockMail() {
  return (
    <>
      <defs>
        <linearGradient id="d-ma" x1="0" y1="0" x2="0" y2="1">
          <stop offset="0" stopColor="#2a7fe0" />
          <stop offset="0.6" stopColor="#7db4ea" />
          <stop offset="1" stopColor="#d3e6f5" />
        </linearGradient>
      </defs>
      <g transform="rotate(-7 52 52)">
        <rect x="17" y="11" width="70" height="82" fill="#fff" stroke="#fff" strokeWidth="4" strokeDasharray="3 2" />
        <rect x="22" y="17" width="60" height="70" fill="url(#d-ma)" />
      </g>
      <path d="M49 52c-5-6-16-12-17-24 6-2 12 8 20 20z" fill="#b9ab96" />
      <path d="M50 56c8 2 18 6 29 16-9 2-21-4-31-12z" fill="#a69a88" />
      <path d="M56 49L40 60l-4 8 10-2 10-12z" fill="#8f6a3e" />
      <circle cx="79" cy="75" r="18" fill="none" stroke="#2a2e3e" strokeWidth="3" opacity="0.6" />
      <circle cx="79" cy="75" r="7" fill="#2d5a8a" opacity="0.85" />
    </>
  );
}

function DockContacts() {
  return (
    <g transform="rotate(-5 52 52)">
      <rect x="76" y="18" width="7" height="17" fill="#d5d5d5" />
      <rect x="76" y="35" width="7" height="17" fill="#4ab2d8" />
      <rect x="76" y="52" width="7" height="17" fill="#5bb36a" />
      <rect x="76" y="69" width="7" height="17" fill="#e8a22a" />
      <rect x="17" y="10" width="62" height="84" rx="3" fill="#b98e55" stroke="#8d6a3a" />
      <circle cx="47" cy="44" r="20" fill="none" stroke="#a37d48" strokeWidth="1.500" />
      <ellipse cx="41" cy="41" rx="6" ry="8" fill="#a37d48" />
      <ellipse cx="54" cy="41" rx="6" ry="8" fill="#a37d48" />
      <path d="M31 61c1-7 6-11 10-11s8 2 9 6l-1 5zM45 61c1-7 5-11 9-11s8 4 9 9z" fill="#a37d48" />
    </g>
  );
}

function DockCalendar() {
  return (
    <g transform="rotate(-5 52 52)">
      <rect x="19" y="18" width="70" height="72" fill="#5b7a8a" />
      <rect x="17" y="14" width="68" height="72" fill="#fff" />
      <rect x="17" y="14" width="68" height="19" fill="#e5504e" />
      <rect x="17" y="78" width="68" height="8" fill="#3f3f3f" opacity="0.7" />
      <text x="51" y="29" fontSize="15" textAnchor="middle" fill="#fff" className="font-['Liberation_Sans',sans-serif]">NOV</text>
      <text x="51" y="70" fontSize="38" textAnchor="middle" fill="#222" className="font-['Liberation_Sans',sans-serif]">2</text>
    </g>
  );
}

function DockNotes() {
  return (
    <g transform="rotate(-5 52 52)">
      <rect x="18" y="12" width="68" height="80" fill="#fdfcf2" stroke="#e5bb49" />
      <rect x="18" y="12" width="68" height="17" fill="#f7d24d" />
      {[36, 44, 52, 60, 68, 76, 84].map((y) => (
        <path key={y} d={`M20 ${y}h64`} stroke="#d8d8d8" />
      ))}
    </g>
  );
}

function DockReminders() {
  return (
    <g transform="rotate(-5 52 52)">
      <rect x="21" y="14" width="62" height="76" rx="4" fill="#f9f9f9" stroke="#333" strokeWidth="0.600" />
      {[
        [28, "#f29a29"],
        [44, "#31b4ef"],
        [60, "#4fd45e"],
        [76, "#c16bd9"],
      ].map(([y, c]) => (
        <g key={y}>
          <circle cx="31" cy={y} r="5" fill={c} />
          <path d={`M40 ${y}h36`} stroke="#dcdcdc" strokeWidth="1.500" />
        </g>
      ))}
    </g>
  );
}

function DockMaps() {
  return (
    <>
      <g transform="rotate(-8 46 50)">
        <rect x="16" y="14" width="62" height="74" fill="#f5f2e6" stroke="#ddd" strokeWidth="2" />
        <path d="M48 16h28v46C60 56 50 36 48 16z" fill="#b0d88b" />
        <path d="M30 16v70" stroke="#3c8fe0" strokeWidth="7" />
        <path d="M18 60h20v26H18z" fill="#f7c6d0" />
      </g>
      <circle cx="37" cy="62" r="10" fill="#1a7be0" />
      <path d="M37 55l5 13-5-3-5 3z" fill="#fff" />
      <circle cx="72" cy="68" r="18" fill="#f5f7f7" stroke="#d5d5d5" />
      <circle cx="72" cy="68" r="11" fill="none" stroke="#4a90b8" />
      <text x="72" y="72" fontSize="11" textAnchor="middle" fill="#333" className="font-['Liberation_Sans',sans-serif]">3D</text>
      <path d="M72 49l3 6h-6z" fill="#e03b30" />
    </>
  );
}

function DockPhotos() {
  const petals = [
    ["#f7923a", 0], ["#f4d02e", 45], ["#7fc84a", 90], ["#5ab48a", 135],
    ["#62a6e0", 180], ["#9a8ad8", 225], ["#c86aa8", 270], ["#ef5e58", 315],
  ];
  return (
    <>
      <circle cx="52" cy="52" r="42" fill="#f4f4f4" />
      {petals.map(([c, a]) => (
        <ellipse key={a} cx="52" cy="31" rx="11" ry="19" fill={c} opacity="0.85" transform={`rotate(${a} 52 52)`} />
      ))}
    </>
  );
}

function DockMessages() {
  return (
    <>
      <defs>
        <linearGradient id="d-me" x1="0" y1="0" x2="0" y2="1">
          <stop offset="0" stopColor="#5bc6fb" />
          <stop offset="1" stopColor="#1278ee" />
        </linearGradient>
      </defs>
      <path d="M52 12c22 0 40 15 40 35S74 80 52 82c-5 0-9 0-14-2-4 3-10 6-17 6 3-3 6-8 6-14C16 65 12 56 12 47c0-20 18-35 40-35z" fill="url(#d-me)" />
      <path d="M68 48c13 0 24 9 24 19 0 8-6 14-14 18 1 3 2 5 4 7-5 0-9-2-12-4-14 1-27-8-27-21 0-10 11-19 25-19z" fill="#f1f8fe" />
      <circle cx="57" cy="67" r="4" fill="#1d68c9" />
      <circle cx="69" cy="67" r="4" fill="#1d68c9" />
      <circle cx="81" cy="67" r="4" fill="#1d68c9" />
    </>
  );
}

function DockFacetime() {
  return (
    <>
      <defs>
        <linearGradient id="d-ft" x1="0" y1="0" x2="0" y2="1">
          <stop offset="0" stopColor="#3cec7c" />
          <stop offset="1" stopColor="#0dbd3a" />
        </linearGradient>
      </defs>
      <rect x="12" y="16" width="80" height="68" rx="12" fill="url(#d-ft)" />
      <rect x="22" y="30" width="36" height="34" rx="7" fill="#f3f3f3" />
      <path d="M60 45l14-10v30L60 55z" fill="#f3f3f3" />
      <ellipse cx="78" cy="72" rx="17" ry="20" fill="#eef3ee" />
      <path d="M72 62c-2 6 2 16 10 20l3-3-4-5-2 1c-2-2-3-5-3-7l2-1-2-6z" fill="#17b53d" />
    </>
  );
}

function DockPages() {
  return (
    <>
      <g transform="rotate(-6 46 52)">
        <rect x="18" y="14" width="64" height="78" fill="#fbfbf8" stroke="#ddd" />
        <rect x="18" y="14" width="64" height="20" fill="#f49e2e" />
        <text x="22" y="29" fontSize="11" fontWeight="700" fill="#fff" className="font-['Liberation_Sans',sans-serif]">PAGES</text>
        <rect x="24" y="40" width="20" height="22" fill="#3b7ddb" />
        <path d="M34 43c6 6 6 12 0 16-6-4-6-10 0-16z" fill="#f2892a" />
        {[42, 48, 54, 60, 68, 74, 80, 86].map((y) => (
          <path key={y} d={`M${y < 62 ? 48 : 24} ${y}H76`} stroke="#b5b5b5" strokeWidth="1.500" />
        ))}
      </g>
      <path d="M80 10l6 3-28 70-5 8 0-10z" fill="#f0a02a" stroke="#b36f14" />
    </>
  );
}

function DockNumbers() {
  const bars = [
    [26, 60, "#e85a5a"], [42, 42, "#f29b38"], [58, 14, "#2fc455"], [74, 36, "#3bb0f0"],
  ];
  return (
    <>
      <rect x="20" y="54" width="72" height="34" fill="#f5f5f5" stroke="#ccc" />
      {bars.map(([x, y, c]) => (
        <g key={x}>
          <rect x={x} y={y} width="13" height={86 - y} fill={c} />
          <rect x={x} y={y} width="13" height="5" fill="#fff" opacity="0.4" />
        </g>
      ))}
    </>
  );
}

function DockKeynote() {
  return (
    <>
      <rect x="50" y="56" width="4" height="26" fill="#a8b2ba" />
      <ellipse cx="52" cy="86" rx="11" ry="6" fill="#b9d2e6" />
      <path d="M18 18h68l2 42H16z" fill="#2b94e0" />
      <rect x="25" y="22" width="54" height="32" fill="#f6f7f7" />
      <circle cx="52" cy="40" r="10" fill="#f2c038" />
      <path d="M52 40V30a10 10 0 0 1 8 16z" fill="#4ca8e8" />
      <path d="M52 40l-8 6a10 10 0 0 0 14 2z" fill="#64c267" />
      <rect x="34" y="25" width="30" height="3" fill="#555" />
    </>
  );
}

function DockItunes() {
  return (
    <>
      <defs>
        <linearGradient id="d-it" x1="0" y1="0" x2="1" y2="1">
          <stop offset="0" stopColor="#fb4d6d" />
          <stop offset="0.5" stopColor="#b85bd5" />
          <stop offset="1" stopColor="#40b7f0" />
        </linearGradient>
        <linearGradient id="d-no" x1="0" y1="0" x2="0" y2="1">
          <stop offset="0" stopColor="#f55373" />
          <stop offset="1" stopColor="#7a6be0" />
        </linearGradient>
      </defs>
      <circle cx="52" cy="52" r="42" fill="url(#d-it)" />
      <circle cx="52" cy="52" r="38" fill="#eeeef3" />
      <path d="M42 30l26-7v40a8 7 0 1 1-5-6V35l-17 5v32a8 7 0 1 1-5-6z" fill="url(#d-no)" />
    </>
  );
}

function Badge({ x = 78 }) {
  return (
    <>
      <circle cx={x} cy="17" r="14" fill="#ee3a36" />
      <text x={x} y="24" fontSize="20" textAnchor="middle" fill="#fff" className="font-['Liberation_Sans',sans-serif]">1</text>
    </>
  );
}

function DockAppStore() {
  return (
    <>
      <defs>
        <linearGradient id="d-as" x1="0" y1="0" x2="0" y2="1">
          <stop offset="0" stopColor="#1cc4f8" />
          <stop offset="1" stopColor="#1662ea" />
        </linearGradient>
      </defs>
      <circle cx="52" cy="52" r="42" fill="#e4ecf3" />
      <circle cx="52" cy="52" r="38" fill="url(#d-as)" />
      <path d="M55 20L34 76M49 20l21 56M25 58h54" stroke="#f4f6f8" strokeWidth="6.500" strokeLinecap="round" fill="none" />
      <Badge x={82} />
    </>
  );
}

function DockPrefs() {
  return (
    <>
      <rect x="14" y="15" width="76" height="74" rx="4" fill="#b4c3ca" />
      <rect x="14" y="76" width="76" height="13" rx="2" fill="#7b8489" />
      <circle cx="52" cy="52" r="35" fill="#3b3b3b" />
      <circle cx="52" cy="52" r="33" fill="none" stroke="#888" strokeWidth="4" strokeDasharray="4 4" />
      <circle cx="52" cy="52" r="23" fill="#666" stroke="#b8b8b8" strokeWidth="3" />
      <path d="M52 52V30M52 52L33 63M52 52l19 11" stroke="#c9c9c9" strokeWidth="5" />
      <circle cx="52" cy="52" r="6" fill="#999" />
      <Badge x={82} />
    </>
  );
}

function DockChrome() {
  return (
    <>
      <circle cx="52" cy="52" r="42" fill="#dd5144" />
      <path d="M52 52L15 73A42 42 0 0 0 52 94z" fill="#1da462" />
      <path d="M15 73A42 42 0 0 1 15 31L34 52z" fill="#1da462" />
      <path d="M89 31A42 42 0 0 1 52 94L70 62 52 34h37z" fill="#ffcd46" />
      <circle cx="52" cy="52" r="19" fill="#fff" />
      <circle cx="52" cy="52" r="15" fill="#4c8bf5" />
    </>
  );
}

function DockTerminal() {
  return (
    <>
      <rect x="14" y="15" width="76" height="72" rx="3" fill="#111" stroke="#bbb" />
      <rect x="18" y="20" width="68" height="63" fill="#2a2a2a" />
      <path d="M20 28l11 7-11 7" fill="none" stroke="#f3f3f3" strokeWidth="3" />
      <path d="M32 44h9" stroke="#f3f3f3" strokeWidth="3" />
    </>
  );
}

function DockMatlab({ id }) {
  return (
    <>
      <defs>
        <linearGradient id={id} x1="0" y1="0" x2="1" y2="0">
          <stop offset="0" stopColor="#a9321a" />
          <stop offset="0.35" stopColor="#d9541e" />
          <stop offset="0.55" stopColor="#f6ae30" />
          <stop offset="0.72" stopColor="#e36c20" />
          <stop offset="1" stopColor="#b5341a" />
        </linearGradient>
      </defs>
      <path d="M5 57l30-14c6-4 12-8 17-12 6-9 12-21 18-23-10 10-12 28-22 44L29 71z" fill="#3f9bd8" />
      <path d="M35 43l17-12-7 21z" fill="#8a3a45" />
      <path d="M70 8c6 2 14 32 30 72-10-8-16-14-23-15-11 5-21 23-30 30-3-7-7-15-15-25 12-12 20-26 24-40 4-10 10-22 14-22z" fill={`url(#${id})`} />
    </>
  );
}

function DockPreview() {
  return (
    <>
      <rect x="22" y="15" width="70" height="56" fill="#a67f4e" stroke="#eee" strokeWidth="3" />
      <g transform="rotate(-7 45 52)">
        <rect x="10" y="24" width="70" height="62" fill="#fff" />
        <rect x="14" y="28" width="62" height="54" fill="#9dbce8" />
        <path d="M14 52h62v12H14z" fill="#1e4f9e" />
        <path d="M14 64h62v18H14z" fill="#d5e6ee" />
        <path d="M14 76c12-5 24-3 40 6H14z" fill="#6d5a44" />
      </g>
      <circle cx="80" cy="62" r="15" fill="#9fb4c2" stroke="#d7d7d7" strokeWidth="4" />
      <path d="M66 62v16c0 6 8 11 14 11s14-5 14-11V62c-2 10-26 10-28 0z" fill="#7a6a54" />
    </>
  );
}

function DockTrash() {
  return (
    <>
      <defs>
        <linearGradient id="d-tr" x1="0" y1="0" x2="1" y2="0">
          <stop offset="0" stopColor="#6b6e70" />
          <stop offset="0.5" stopColor="#8c8f90" />
          <stop offset="1" stopColor="#4e5052" />
        </linearGradient>
      </defs>
      <path d="M24 24h56l-6 60a6 6 0 0 1-6 6H36a6 6 0 0 1-6-6z" fill="url(#d-tr)" opacity="0.9" />
      <ellipse cx="52" cy="24" rx="28" ry="7" fill="#3d3f41" stroke="#9a9d9e" />
      <path d="M36 22l6-12 6 12zM50 22l6-14 6 14zM60 22l4-10 6 10z" fill="#f0f0f0" />
    </>
  );
}

function DockIcon({ dot, children }) {
  return (
    <div className="w-[104px] h-[128px] shrink-0 flex flex-col items-center pt-[8px]">
      <svg width="104" height="104" viewBox="0 0 104 104" className="shrink-0">{children}</svg>
      {dot && <div className="mt-[5px] w-[7px] h-[7px] rounded-full bg-[#9aa3b2]" />}
    </div>
  );
}

function DockSep() {
  return (
    <div className="w-[48px] h-[128px] shrink-0 flex justify-center pt-[16px]">
      <div className="w-[1px] h-[104px] bg-[#5c6070]" />
    </div>
  );
}

function Dock() {
  return (
    <div className="flex-1 min-h-0 relative">
      <div className="ml-[85px] w-[2710px] h-full border border-b-0 border-[#3a3d4c] rounded-t-[10px] pl-[6px] flex bg-gradient-to-r from-[#1f2230] via-[#34343a_52%] to-[#161b2e]">
        <DockIcon dot><DockFinder /></DockIcon>
        <DockIcon><DockSiri /></DockIcon>
        <DockIcon><DockRocket /></DockIcon>
        <DockIcon dot><DockSafari /></DockIcon>
        <DockIcon><DockMail /></DockIcon>
        <DockIcon><DockContacts /></DockIcon>
        <DockIcon><DockCalendar /></DockIcon>
        <DockIcon><DockNotes /></DockIcon>
        <DockIcon><DockReminders /></DockIcon>
        <DockIcon><DockMaps /></DockIcon>
        <DockIcon><DockPhotos /></DockIcon>
        <DockIcon><DockMessages /></DockIcon>
        <DockIcon><DockFacetime /></DockIcon>
        <DockIcon><DockPages /></DockIcon>
        <DockIcon><DockNumbers /></DockIcon>
        <DockIcon><DockKeynote /></DockIcon>
        <DockIcon dot><DockItunes /></DockIcon>
        <DockIcon><DockAppStore /></DockIcon>
        <DockIcon><DockPrefs /></DockIcon>
        <DockSep />
        <DockIcon dot><DockChrome /></DockIcon>
        <DockIcon dot><DockTerminal /></DockIcon>
        <DockIcon dot><DockMatlab id="d-ml1" /></DockIcon>
        <DockIcon dot><DockPreview /></DockIcon>
        <DockIcon dot><DockMatlab id="d-ml2" /></DockIcon>
        <DockSep />
        <DockIcon><DockTrash /></DockIcon>
      </div>
    </div>
  );
}

export default function App() {
  return (
    <div className="w-[2880px] h-[1800px] relative overflow-hidden bg-[#0a1428] flex flex-col font-['Liberation_Sans',sans-serif]">
      <MenuBar />
      <div className="h-[1623px] shrink-0 bg-[#e9e9e9] rounded-t-[12px] flex flex-col">
        <div className="h-[44px] shrink-0 bg-[#f6f6f6] border-b-2 border-[#e4e4e4] rounded-t-[12px] flex items-center">
          <div className="ml-[16px] w-[24px] h-[24px] rounded-full bg-[#dcdcdc] border border-[#d0d0d0]" />
          <div className="ml-[16px] w-[24px] h-[24px] rounded-full bg-[#dcdcdc] border border-[#d0d0d0]" />
          <div className="ml-[16px] w-[24px] h-[24px] rounded-full bg-[#dcdcdc] border border-[#d0d0d0]" />
          <span className="ml-[1231px] pt-[2px] text-[26px] text-[#aaaaaa]">MIMOforRRR *</span>
        </div>
        <RibbonTabs />
        <Ribbon />
        <Editor />
        <StatusBar />
      </div>
      <div className="h-[3px] shrink-0 ml-[195px] bg-black" />
      <Dock />
      <ScopeWindow />
    </div>
  );
}
